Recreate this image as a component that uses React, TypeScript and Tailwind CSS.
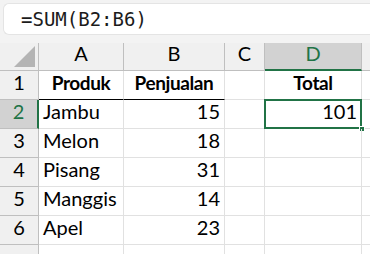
import React from "react";

const cols = ["A", "B", "C", "D"];
const rows: [string, string, string, string][] = [
  ["Produk", "Penjualan", "", "Total"],
  ["Jambu", "15", "", "101"],
  ["Melon", "18", "", ""],
  ["Pisang", "31", "", ""],
  ["Manggis", "14", "", ""],
  ["Apel", "23", "", ""],
  ["", "", "", ""],
];

const font = { fontFamily: "Lato, 'Open Sans', sans-serif" };

export default function App() {
  return (
    <div className="w-[370px] h-[254px] overflow-hidden bg-[#f3f3f3]" style={font}>
      <div className="h-[43px] pt-[3px] pl-[3px]">
        <div
          className="h-[32px] bg-white rounded-l-[6px] border border-[#e4e4e4] border-r-0 flex items-center pl-[17px] text-[19px] text-[#1b1b1b]"
          style={{ fontFamily: "'DejaVu Sans Mono', monospace" }}
        >
          =SUM(B2:B6)
        </div>
      </div>
      <div className="grid grid-cols-[39px_85px_101px_40px_97px_1fr] grid-rows-[28px_29px_29px_29px_29px_29px_29px_29px] bg-white text-[20px] text-black">
        {/* header row */}
        <div className="bg-[#f0f0f0] border-r border-b border-[#bfbfbf] flex items-end justify-end pr-[3px] pb-[3px]">
          <svg width="21" height="21" viewBox="0 0 21 21">
            <polygon points="21,0 21,21 0,21" fill="#b4b4b4" />
          </svg>
        </div>
        {cols.map((c) => (
          <div
            key={c}
            className={
              c === "D"
                ? "bg-[#d2d2d2] border-r border-[#bfbfbf] border-b-2 border-b-[#217346] text-[#217346] flex items-end pb-[1px] justify-center"
                : "bg-[#f0f0f0] border-r border-b border-[#bfbfbf] flex items-end pb-[2px] justify-center"
            }
          >
            {c}
          </div>
        ))}
        <div className="bg-[#f0f0f0] border-b border-[#bfbfbf]" />
        {rows.map((r, i) => (
          <React.Fragment key={i}>
            <div
              className={
                i === 1
                  ? "bg-[#d2d2d2] border-b border-[#bfbfbf] border-r-2 border-r-[#217346] text-[#217346] flex items-end pb-[2px] justify-center"
                  : "bg-[#f0f0f0] border-r border-b border-[#bfbfbf] flex items-end pb-[2px] justify-center"
              }
            >
              {i < 6 ? i + 1 : ""}
            </div>
            {r.map((v, j) => {
              const bold = i === 0;
              const num = i > 0 && (j === 1 || j === 3);
              const dark = i === 0 && (j === 0 || j === 1);
              return (
                <div
                  key={j}
                  className={
                    "relative border-r border-[#e1e1e1] flex items-end pb-[2px] px-[4px] " +
                    (dark ? "border-b border-b-[#000000] " : "border-b ") +
                    (bold ? "font-bold text-[19px] tracking-[-0.4px] justify-center " : "") +
                    (num ? "justify-end " : !bold ? "justify-start " : "")
                  }
                >
                  {v}
                  {i === 1 && j === 3 && (
                    <>
                      <div className="absolute left-[-1px] top-[-1px] right-[-1px] bottom-[-1px] border-2 border-[#217346]" />
                      <div className="absolute right-[-4px] bottom-[-4px] w-[6px] h-[6px] bg-[#217346] border border-white" />
                    </>
                  )}
                </div>
              );
            })}
            <div className="border-b border-[#e1e1e1]" />
          </React.Fragment>
        ))}
      </div>
    </div>
  );
}
